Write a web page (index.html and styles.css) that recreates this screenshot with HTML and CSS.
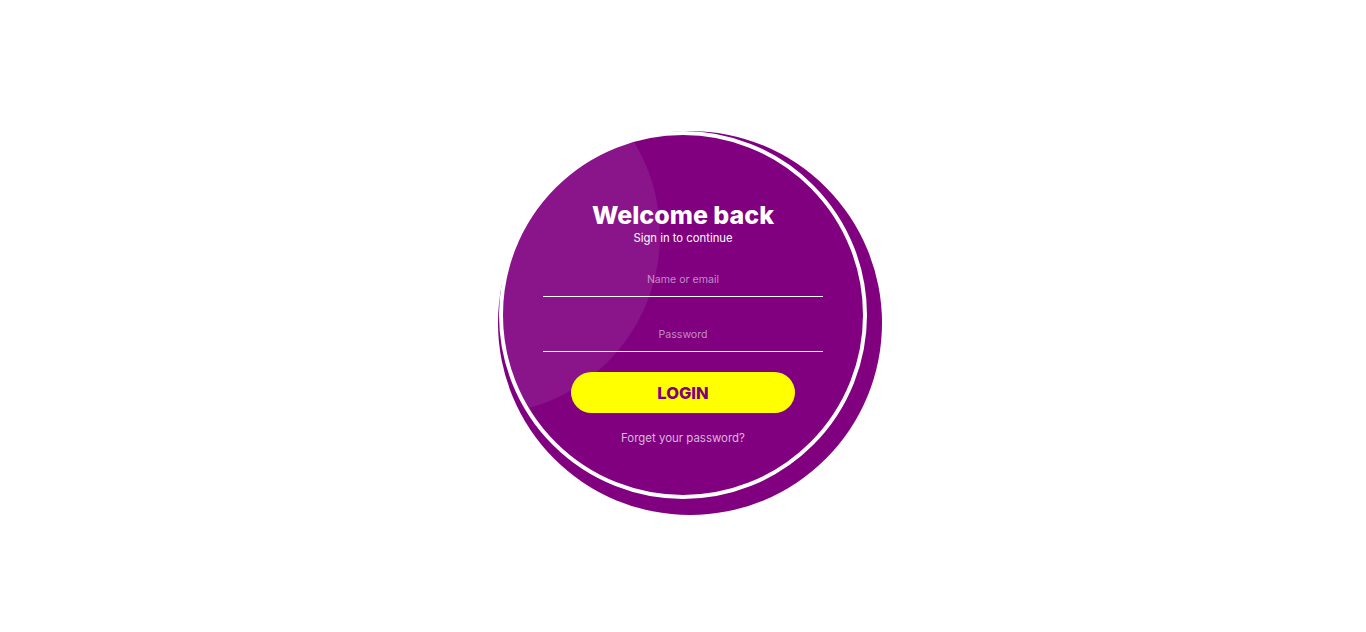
FILE: index.html
```html
<!DOCTYPE html>
<html lang="en">
<head>
<meta charset="utf-8">
<title>Login</title>
<link rel="stylesheet" href="styles.css">
</head>
<body>
<main class="stage">
  <div class="ring">
    <form class="card">
      <h1 class="title">Welcome back</h1>
      <p class="subtitle">Sign in to continue</p>
      <input class="field field-first" type="text" placeholder="Name or email">
      <input class="field field-second" type="password" placeholder="Password">
      <button class="login" type="button">LOGIN</button>
      <a class="forgot" href="#">Forget your password?</a>
    </form>
  </div>
</main>
</body>
</html>
```
FILE: styles.css
```css
* { box-sizing: border-box; }
html, body { margin: 0; height: 100%; background: #ffffff; }
body { font-family: "Inter", "Open Sans", sans-serif; }

.stage {
  height: 100%;
  display: flex;
  align-items: center;
  justify-content: center;
}

.ring {
  position: relative;
  width: 368px;
  height: 368px;
  margin-top: -2px;
}

.ring::before {
  content: "";
  position: absolute;
  top: 0;
  left: -1px;
  width: 384px;
  height: 384px;
  border-radius: 50%;
  background: #800080;
}

.card {
  position: relative;
  width: 368px;
  height: 368px;
  border-radius: 50%;
  border: 4px solid #ffffff;
  background: #800080;
  overflow: hidden;
  display: flex;
  flex-direction: column;
  align-items: center;
  padding-top: 65px;
  margin: 0;
}

.card::before {
  content: "";
  position: absolute;
  left: -203px;
  top: -80px;
  width: 360px;
  height: 360px;
  border-radius: 50%;
  background: rgba(255, 255, 255, 0.08);
}

.title {
  position: relative;
  margin: 0;
  font-size: 25px;
  line-height: 30px;
  font-weight: 800;
  color: #ffffff;
}

.subtitle {
  position: relative;
  margin: 0;
  font-size: 11.3px;
  line-height: 16px;
  color: #ffffff;
}

.field {
  position: relative;
  width: 280px;
  height: 31px;
  padding: 0 0 4px;
  border: 0;
  border-bottom: 1px solid #ffffff;
  background: transparent;
  font-family: inherit;
  font-size: 10.6px;
  color: #ffffff;
  text-align: center;
  outline: none;
}
.field::placeholder { color: rgba(255, 255, 255, 0.55); }
.field-first { margin-top: 20px; }
.field-second { margin-top: 24px; }

.login {
  position: relative;
  margin-top: 20px;
  width: 224px;
  height: 41px;
  border: 0;
  border-radius: 21px;
  background: #ffff00;
  color: #800080;
  font-family: inherit;
  font-size: 16.5px;
  font-weight: 800;
  cursor: pointer;
}

.forgot {
  position: relative;
  margin-top: 17px;
  font-size: 11.45px;
  line-height: 16px;
  color: rgba(255, 255, 255, 0.72);
  text-decoration: none;
}
```
